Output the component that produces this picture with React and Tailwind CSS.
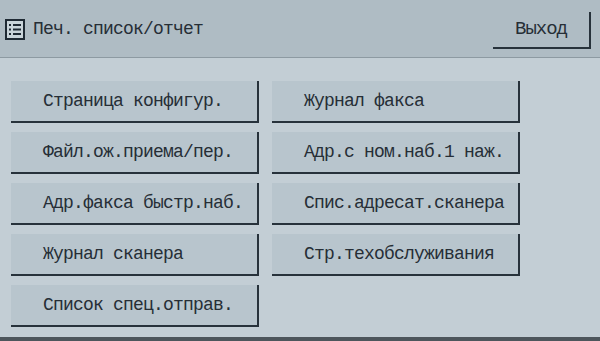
const left = [
  'Страница конфигур.',
  'Файл.ож.приема/пер.',
  'Адр.факса быстр.наб.',
  'Журнал сканера',
  'Список спец.отправ.',
];

const right = [
  'Журнал факса',
  'Адр.с ном.наб.1 наж.',
  'Спис.адресат.сканера',
  'Стр.техобслуживания',
];

const mono = { fontFamily: '"Liberation Mono", "DejaVu Sans Mono", monospace' };

function MenuButton({ label }) {
  return (
    <button
      className="flex h-[42px] w-[248px] items-center border-r-2 border-b-2 border-[#27323b] bg-[#b8c5cd] pl-[32px] text-left text-[18px] tracking-[-0.8px] text-[#262e36]"
      style={mono}
    >
      {label}
    </button>
  );
}

function ListIcon() {
  return (
    <svg width="20" height="21" viewBox="0 0 20 21" className="shrink-0">
      <rect x="1" y="1" width="18" height="19" fill="#c9d4da" stroke="#1f2a34" strokeWidth="2" />
      <rect x="4" y="5" width="2" height="2" fill="#1f2a34" />
      <rect x="8" y="5" width="8" height="2" fill="#1f2a34" />
      <rect x="4" y="9.5" width="2" height="2" fill="#1f2a34" />
      <rect x="8" y="9.5" width="8" height="2" fill="#1f2a34" />
      <rect x="4" y="14" width="2" height="2" fill="#1f2a34" />
      <rect x="8" y="14" width="8" height="2" fill="#1f2a34" />
    </svg>
  );
}

export default function App() {
  return (
    <div className="flex h-[341px] w-[600px] flex-col overflow-hidden bg-[#c3ced5]" style={mono}>
      <div className="flex h-[58px] items-start justify-between border-b border-[#8d9aa2] bg-[#afbcc4]">
        <div className="mt-[16px] flex items-center gap-[8px] pl-[5px]">
          <ListIcon />
          <span className="text-[18px] tracking-[-0.8px] text-[#262e36]">Печ. список/отчет</span>
        </div>
        <button
          className="mt-[12px] mr-[9px] flex h-[37px] w-[98px] items-center justify-center border-r-2 border-b-2 border-[#27323b] bg-[#afbcc4] text-[19px] tracking-[-1px] text-[#262e36]"
          style={mono}
        >
          Выход
        </button>
      </div>
      <div className="flex flex-1 gap-[13px] pt-[23px] pl-[11px]">
        <div className="flex flex-col gap-[9px]">
          {left.map((l) => (
            <MenuButton key={l} label={l} />
          ))}
        </div>
        <div className="flex flex-col gap-[9px]">
          {right.map((l) => (
            <MenuButton key={l} label={l} />
          ))}
        </div>
      </div>
      <div className="h-[4px] bg-[#4d565c]" />
    </div>
  );
}
